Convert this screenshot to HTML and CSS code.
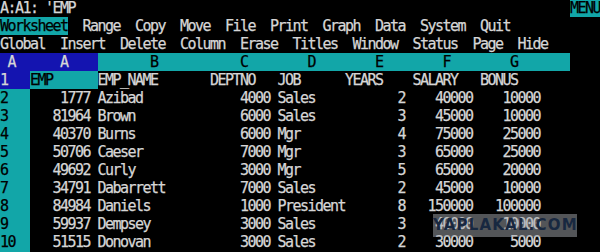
FILE: index.html
```html
<!DOCTYPE html>
<html>
<head>
<meta charset="utf-8">
<link rel="stylesheet" href="styles.css">
</head>
<body>
<div class="screen">
  <div class="line status"><span>A:A1: 'EMP</span><span class="mode">MENU</span></div>
  <div class="line"><span class="hl">Worksheet</span>  Range  Copy  Move  File  Print  Graph  Data  System  Quit</div>
  <div class="line">Global  Insert  Delete  Column  Erase  Titles  Window  Status  Page  Hide</div>
  <div class="line hdr">
    <span class="rn cur"> A</span><span class="c w9 cur ctr">A</span><span class="c w15 ctr">B</span><span class="c w9 ctr">C</span><span class="c w9 ctr">D</span><span class="c w9 ctr">E</span><span class="c w9 ctr">F</span><span class="c w9 ctr">G</span><span class="c w3"></span>
  </div>
  <div class="line row"><span class="rn cur">1</span><span class="c w9 ptr">EMP</span><span class="c w15">EMP_NAME</span><span class="c w9">DEPTNO</span><span class="c w9">JOB</span><span class="c w9">YEARS</span><span class="c w9">SALARY</span><span class="c w9">BONUS</span></div>
  <div class="line row"><span class="rn">2</span><span class="c w9 num">1777</span><span class="c w15">Azibad</span><span class="c w9 num">4000</span><span class="c w9">Sales</span><span class="c w9 num">2</span><span class="c w9 num">40000</span><span class="c w9 num">10000</span></div>
  <div class="line row"><span class="rn">3</span><span class="c w9 num">81964</span><span class="c w15">Brown</span><span class="c w9 num">6000</span><span class="c w9">Sales</span><span class="c w9 num">3</span><span class="c w9 num">45000</span><span class="c w9 num">10000</span></div>
  <div class="line row"><span class="rn">4</span><span class="c w9 num">40370</span><span class="c w15">Burns</span><span class="c w9 num">6000</span><span class="c w9">Mgr</span><span class="c w9 num">4</span><span class="c w9 num">75000</span><span class="c w9 num">25000</span></div>
  <div class="line row"><span class="rn">5</span><span class="c w9 num">50706</span><span class="c w15">Caeser</span><span class="c w9 num">7000</span><span class="c w9">Mgr</span><span class="c w9 num">3</span><span class="c w9 num">65000</span><span class="c w9 num">25000</span></div>
  <div class="line row"><span class="rn">6</span><span class="c w9 num">49692</span><span class="c w15">Curly</span><span class="c w9 num">3000</span><span class="c w9">Mgr</span><span class="c w9 num">5</span><span class="c w9 num">65000</span><span class="c w9 num">20000</span></div>
  <div class="line row"><span class="rn">7</span><span class="c w9 num">34791</span><span class="c w15">Dabarrett</span><span class="c w9 num">7000</span><span class="c w9">Sales</span><span class="c w9 num">2</span><span class="c w9 num">45000</span><span class="c w9 num">10000</span></div>
  <div class="line row"><span class="rn">8</span><span class="c w9 num">84984</span><span class="c w15">Daniels</span><span class="c w9 num">1000</span><span class="c w9">President</span><span class="c w9 num">8</span><span class="c w9 num">150000</span><span class="c w9 num">100000</span></div>
  <div class="line row"><span class="rn">9</span><span class="c w9 num">59937</span><span class="c w15">Dempsey</span><span class="c w9 num">3000</span><span class="c w9">Sales</span><span class="c w9 num">3</span><span class="c w9 num">40000</span><span class="c w9 num">10000</span></div>
  <div class="line row"><span class="rn">10</span><span class="c w9 num">51515</span><span class="c w15">Donovan</span><span class="c w9 num">3000</span><span class="c w9">Sales</span><span class="c w9 num">2</span><span class="c w9 num">30000</span><span class="c w9 num">5000</span></div>
  <div class="line row"><span class="rn"></span></div>
</div>
<div class="watermark">YAPLAKAL.COM</div>
</body>
</html>
```
FILE: styles.css
```css
html, body {
  margin: 0;
  padding: 0;
  background: #000;
  overflow: hidden;
  height: 252px;
}
.screen {
  width: 600px;
  height: 252px;
  overflow: hidden;
  font-family: "DejaVu Sans Mono", monospace;
  font-size: 15px;
  letter-spacing: -1.53px;
  -webkit-text-stroke: 0.25px currentColor;
  color: #d6d6d6;
}
.line {
  height: 18px;
  line-height: 18px;
  white-space: pre;
  display: flex;
}
.status {
  height: 17px;
  line-height: 17px;
  justify-content: space-between;
  align-items: flex-start;
}
.mode, .hl {
  background: #12a6a8;
  color: #000;
}
.hl { display: inline-block; }
.rn {
  width: 30px;
  flex: none;
  background: #12a6a8;
  color: #000;
}
.c {
  flex: none;
}
.w9 { width: 67.5px; }
.w15 { width: 112.5px; }
.w3 { width: 22.5px; }
.hdr .c { background: #12a6a8; color: #000; }
.ctr { text-align: center; }
.hdr .cur, .rn.cur {
  background: #1414b0;
  color: #d6d6d6;
}
.ptr {
  background: #12a6a8;
  color: #000;
}
.num {
  text-align: right;
  padding-right: 7.5px;
  box-sizing: border-box;
}
.watermark {
  position: absolute;
  left: 433px;
  top: 214px;
  width: 144px;
  height: 23px;
  line-height: 23px;
  background: rgba(165, 170, 175, 0.5);
  color: #182840;
  font-family: "DejaVu Sans", sans-serif;
  font-weight: bold;
  font-size: 15px;
  text-align: center;
  letter-spacing: 1.2px;
}
```
